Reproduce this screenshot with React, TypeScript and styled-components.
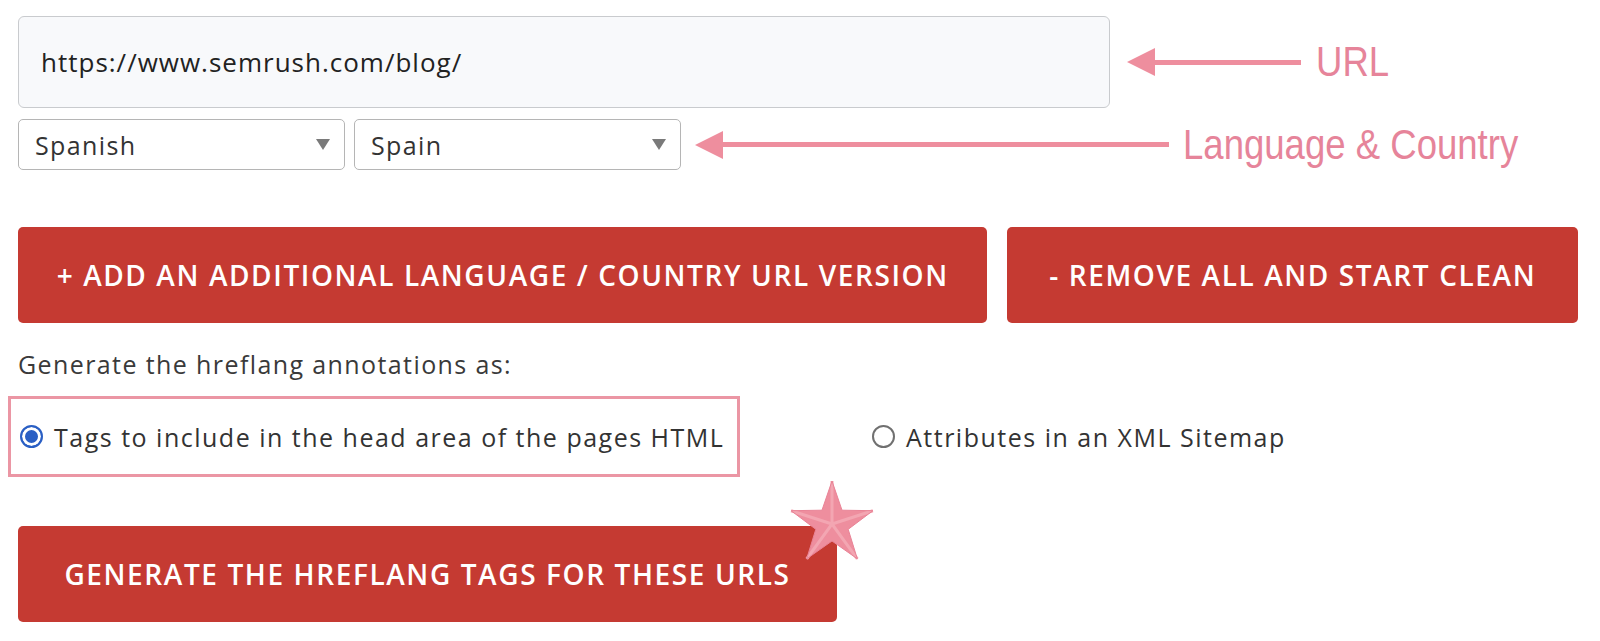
import styled, { createGlobalStyle } from 'styled-components';

const GlobalStyle = createGlobalStyle`
  body {
    margin: 0;
    background: #ffffff;
    font-family: 'Open Sans', 'Liberation Sans', sans-serif;
  }
`;

const Page = styled.div`
  padding: 16px 0 0 18px;
  width: 1560px;
  color: #333333;
`;

const Row = styled.div<{ gap?: number; top?: number }>`
  display: flex;
  flex-direction: row;
  align-items: center;
  gap: ${(p) => p.gap ?? 0}px;
  margin-top: ${(p) => p.top ?? 0}px;
`;

const UrlInput = styled.div`
  box-sizing: border-box;
  width: 1092px;
  height: 92px;
  padding: 0 22px;
  display: flex;
  align-items: center;

  background: #f8f9fb;
  border: 1.5px solid #c9cbce;
  border-radius: 6px;

  font-size: 26px;
  letter-spacing: 1px;
  color: #222222;
`;

const Select = styled.div`
  box-sizing: border-box;
  width: 327px;
  height: 51px;
  padding: 0 14px 0 16px;
  display: flex;
  align-items: center;
  justify-content: space-between;

  background: #ffffff;
  border: 1.5px solid #b5b5b5;
  border-radius: 5px;

  font-size: 25px;
  letter-spacing: 1.4px;
  color: #333333;
`;

const Caret = styled.span`
  width: 0;
  height: 0;
  border-left: 7px solid transparent;
  border-right: 7px solid transparent;
  border-top: 11px solid #7a7a7a;
`;

const Arrow = styled.div<{ width: number; ml: number }>`
  display: flex;
  align-items: center;
  width: ${(p) => p.width}px;
  margin-left: ${(p) => p.ml}px;
  flex-shrink: 0;
`;

const ArrowHead = styled.span`
  width: 0;
  height: 0;
  border-top: 14px solid transparent;
  border-bottom: 14px solid transparent;
  border-right: 28px solid #ee8e9e;
`;

const ArrowShaft = styled.span`
  flex: 1;
  height: 5px;
  background: #ee8e9e;
  margin-left: -2px;
`;

const Note = styled.div<{ ml: number }>`
  margin-left: ${(p) => p.ml}px;
  font-family: 'Liberation Sans', Arial, sans-serif;
  font-size: 42px;
  color: #e6849a;
  white-space: nowrap;
  transform: scaleX(0.87);
  transform-origin: left center;
`;

const RedButton = styled.button<{ width: number }>`
  box-sizing: border-box;
  width: ${(p) => p.width}px;
  height: 96px;
  padding: 0;
  border: none;
  border-radius: 5px;
  background: #c53a32;
  color: #ffffff;

  font-family: 'Open Sans', 'Liberation Sans', sans-serif;
  font-weight: 600;
  font-size: 28px;
  letter-spacing: 1.6px;
  text-transform: uppercase;
  white-space: nowrap;
  cursor: pointer;
`;

const Lead = styled.div`
  margin-top: 26px;
  font-size: 25px;
  line-height: 30px;
  letter-spacing: 1.4px;
  color: #3a3a3a;
`;

const Highlight = styled.div`
  box-sizing: border-box;
  margin-left: -10px;
  width: 732px;
  height: 81px;
  padding-left: 9px;
  display: flex;
  align-items: center;
  border: 3px solid #eb96a4;
`;

const Option = styled.label<{ ml?: number }>`
  display: flex;
  align-items: center;
  gap: 11px;
  margin-left: ${(p) => p.ml ?? 0}px;
  font-size: 25px;
  letter-spacing: 1.5px;
  color: #333333;
  white-space: nowrap;
`;

const Radio = styled.span<{ checked?: boolean }>`
  box-sizing: border-box;
  width: 23px;
  height: 23px;
  border-radius: 50%;
  border: 2px solid ${(p) => (p.checked ? '#2a5fc4' : '#707070')};
  background: ${(p) => (p.checked ? '#2a5fc4' : '#ffffff')};
  box-shadow: ${(p) => (p.checked ? 'inset 0 0 0 3px #ffffff' : 'none')};
`;

const GenerateWrap = styled.div`
  position: relative;
  margin-top: 49px;
  width: 819px;
`;

const StarMark = styled.svg`
  position: absolute;
  left: 771px;
  top: -46px;
`;

function Star() {
  const cx = 43;
  const cy = 44;
  const outer = 43;
  const inner = 17;
  const pts: string[] = [];
  for (let i = 0; i < 10; i++) {
    const r = i % 2 === 0 ? outer : inner;
    const a = (Math.PI / 5) * i - Math.PI / 2;
    pts.push(`${(cx + r * Math.cos(a)).toFixed(1)},${(cy + r * Math.sin(a)).toFixed(1)}`);
  }
  const facets: string[] = [];
  for (let i = 0; i < 10; i += 2) {
    const a = (Math.PI / 5) * i - Math.PI / 2;
    facets.push(`M${cx},${cy} L${(cx + outer * Math.cos(a)).toFixed(1)},${(cy + outer * Math.sin(a)).toFixed(1)}`);
  }
  return (
    <StarMark width="86" height="88" viewBox="0 0 86 88">
      <polygon points={pts.join(' ')} fill="#ee8e9e" />
      <path d={facets.join(' ')} stroke="#f3a6b2" strokeWidth="3" />
      <polygon points={pts.join(' ')} fill="none" stroke="#e98396" strokeWidth="1" />
    </StarMark>
  );
}

export default function App() {
  return (
    <>
      <GlobalStyle />
      <Page>
        <Row>
          <UrlInput>https://www.semrush.com/blog/</UrlInput>
          <Arrow width={174} ml={17}>
            <ArrowHead />
            <ArrowShaft />
          </Arrow>
          <Note ml={15}>URL</Note>
        </Row>

        <Row top={11}>
          <Row gap={9}>
            <Select>
              Spanish
              <Caret />
            </Select>
            <Select>
              Spain
              <Caret />
            </Select>
          </Row>
          <Arrow width={474} ml={14}>
            <ArrowHead />
            <ArrowShaft />
          </Arrow>
          <Note ml={14}>Language &amp; Country</Note>
        </Row>

        <Row gap={20} top={57}>
          <RedButton width={970}>+ Add an additional language / country URL version</RedButton>
          <RedButton width={571}>- Remove all and start clean</RedButton>
        </Row>

        <Lead>Generate the hreflang annotations as:</Lead>

        <Row top={17}>
          <Highlight>
            <Option>
              <Radio checked />
              Tags to include in the head area of the pages HTML
            </Option>
          </Highlight>
          <Option ml={132}>
            <Radio />
            Attributes in an XML Sitemap
          </Option>
        </Row>

        <GenerateWrap>
          <RedButton width={819}>Generate the hreflang tags for these URLs</RedButton>
          <Star />
        </GenerateWrap>
      </Page>
    </>
  );
}
